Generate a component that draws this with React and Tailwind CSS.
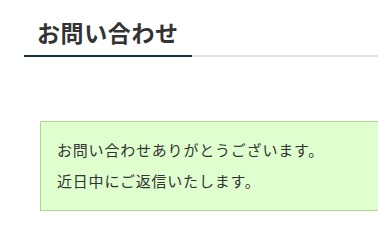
export default function App() {
  const jp = { fontFamily: '"Noto Sans CJK JP", "Noto Sans", sans-serif' };
  return (
    <div className="w-[378px] h-[248px] overflow-hidden bg-white" style={jp}>
      <div className="pt-[15px] ml-[24px] border-b-2 border-[#e2e2e2] flex">
        <h1 className="w-[168px] pl-[13px] pb-[6px] -mb-[2px] border-b-2 border-[#16323f] text-[23px] leading-[34px] font-bold tracking-[0.6px] text-[#333333]">
          お問い合わせ
        </h1>
      </div>
      <div className="mt-[64px] ml-[40px] w-[360px] border border-[#aed68f] bg-[#dfffcf] pt-[12px] pb-[14px] pl-[16px] text-[15px] leading-[31px] tracking-[0.8px] text-[#333333]">
        <p>お問い合わせありがとうございます。</p>
        <p>近日中にご返信いたします。</p>
      </div>
    </div>
  );
}
